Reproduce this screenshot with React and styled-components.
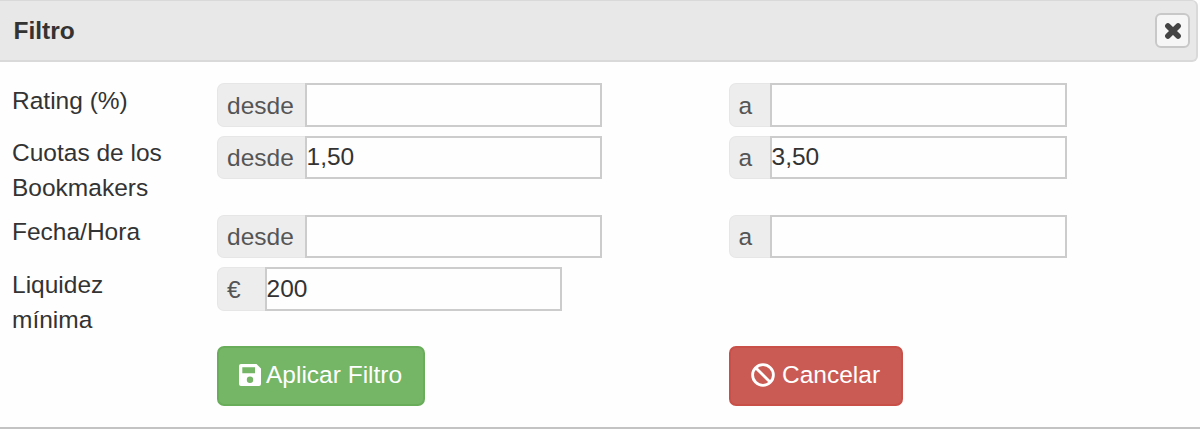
import React, { useState } from "react";
import styled, { createGlobalStyle } from "styled-components";

const GlobalStyle = createGlobalStyle`
  * {
    box-sizing: border-box;
  }
  body {
    margin: 0;
    background: #fefefe;
    color: #333;
    font-family: "Liberation Sans", Arial, sans-serif;
    font-size: 24.5px;
    line-height: 35px;
  }
`;

const Panel = styled.div`
  height: 429px;
  border-bottom: 2px solid #c3c3c3;
`;

const Header = styled.div`
  display: flex;
  align-items: center;
  justify-content: space-between;
  height: 62px;
  width: 1198px;
  padding: 0 6.5px 0 13.5px;
  background: #e8e8e8;
  border: 1px solid #d9d9d9;
  border-width: 1px 2px 2px 0;
  border-radius: 0 6px 6px 0;
`;

const Title = styled.span`
  padding-bottom: 1px;
  font-weight: bold;
`;

const CloseButton = styled.button`
  display: flex;
  align-items: center;
  justify-content: center;
  width: 35px;
  height: 35px;
  padding: 1px 0 0 1px;
  background: #f6f6f6;
  border: 2px solid #c8c8c8;
  border-radius: 6px;
`;

const Form = styled.form`
  display: grid;
  grid-template-columns: 205px 511.5px 1fr;
  grid-template-rows: 52.5px 79px 52.5px 79px 60px;
  padding: 21px 0 0 12px;
`;

const Label = styled.label`
  width: 180px;
  margin-top: -0.3px;
`;

const Group = styled.div`
  display: flex;
  height: 43.5px;
  grid-column: ${(props) => props.$column};
`;

const Addon = styled.span`
  width: ${(props) => props.$width}px;
  padding: 3.8px 0 0 9px;
  color: #555;
  background: #ededed;
  border: 1px solid #e6e6e6;
  border-right: 0;
  border-radius: 7px 0 0 7px;
`;

const Input = styled.input`
  width: 297px;
  height: 43.5px;
  padding: 0;
  color: #333;
  font: inherit;
  background: #fefefe;
  border: 2px solid #ccc;
  border-radius: 0;
  outline: 0;
`;

const Button = styled.button`
  display: flex;
  align-items: center;
  justify-self: start;
  grid-column: ${(props) => props.$column};
  width: ${(props) => props.$width}px;
  height: 59.5px;
  padding: 0 0 2.5px 20px;
  gap: ${(props) => props.$gap}px;
  color: #fff;
  font: inherit;
  white-space: nowrap;
  background: ${(props) => props.$color};
  border: 2px solid ${(props) => props.$border};
  border-radius: 7px;
`;

function CloseIcon() {
  return (
    <svg width="18" height="18" viewBox="0 0 18 18">
      <path d="M3.900 3.900l10.200 10.200M14.100 3.900L3.900 14.100" stroke="#444" strokeWidth="5.600" strokeLinecap="round" />
    </svg>
  );
}

function SaveIcon() {
  return (
    <svg width="22" height="22" viewBox="0 0 22 22">
      <path
        fill="#fff"
        fillRule="evenodd"
        d="M2 0h15.500l4.500 4.500v15.500a2 2 0 0 1-2 2H2a2 2 0 0 1-2-2V2a2 2 0 0 1 2-2zM3.300 3.200v6h12.700v-6zM11 12.600a3.200 3.200 0 1 0 0 6.400a3.200 3.200 0 0 0 0-6.400z"
      />
    </svg>
  );
}

function BanIcon() {
  return (
    <svg width="24" height="24" viewBox="0 0 24 24" fill="none" stroke="#fff" strokeWidth="2.8">
      <circle cx="12" cy="12" r="10.400" />
      <path d="M4.700 4.700l14.600 14.600" />
    </svg>
  );
}

function Field({ name, addon, width, column, initial = "" }) {
  const [value, setValue] = useState(initial);
  return (
    <Group $column={column}>
      <Addon $width={width}>{addon}</Addon>
      <Input name={name} value={value} onChange={(e) => setValue(e.target.value)} />
    </Group>
  );
}

export default function App() {
  return (
    <Panel>
      <GlobalStyle />
      <Header>
        <Title>Filtro</Title>
        <CloseButton type="button" aria-label="Cerrar">
          <CloseIcon />
        </CloseButton>
      </Header>
      <Form>
        <Label>Rating (%)</Label>
        <Field name="ratingFrom" addon="desde" width={87.5} column={2} />
        <Field name="ratingTo" addon="a" width={41} column={3} />

        <Label>Cuotas de los Bookmakers</Label>
        <Field name="oddsFrom" addon="desde" width={87.5} column={2} initial="1,50" />
        <Field name="oddsTo" addon="a" width={41} column={3} initial="3,50" />

        <Label>Fecha/Hora</Label>
        <Field name="dateFrom" addon="desde" width={87.5} column={2} />
        <Field name="dateTo" addon="a" width={41} column={3} />

        <Label>
          Liquidez
          <br />
          mínima
        </Label>
        <Field name="liquidity" addon="€" width={47.5} column={2} initial="200" />

        <Button type="button" $column={2} $width={208} $gap={5} $color="#74b566" $border="#69ad5b">
          <SaveIcon />
          Aplicar Filtro
        </Button>
        <Button type="button" $column={3} $width={174} $gap={7.5} $color="#ca5b54" $border="#c94f49">
          <BanIcon />
          Cancelar
        </Button>
      </Form>
    </Panel>
  );
}
